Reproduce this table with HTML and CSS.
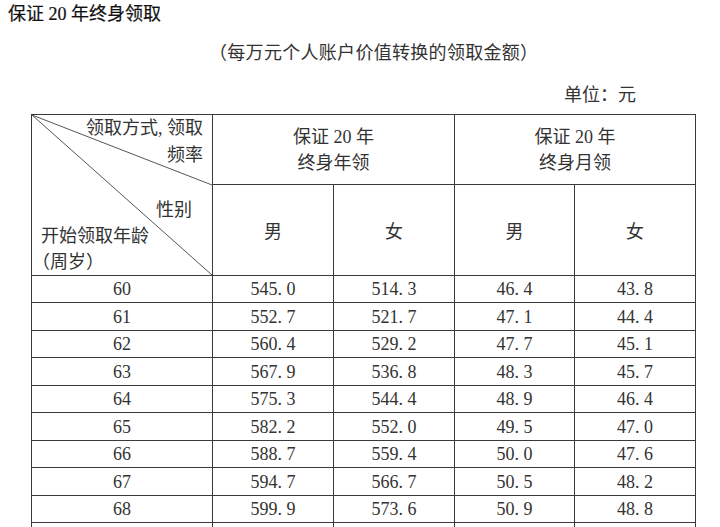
FILE: index.html
```html
<!DOCTYPE html>
<html lang="zh-CN">
<head>
<meta charset="utf-8">
<title>保证20年终身领取</title>
<link rel="stylesheet" href="styles.css">
</head>
<body>
<div class="page">
  <h1 class="title">保证 20 年终身领取</h1>
  <p class="subtitle">（每万元个人账户价值转换的领取金额）</p>
  <p class="unit">单位：元</p>
  <table class="grid">
    <colgroup>
      <col class="c-age">
      <col class="c-val">
      <col class="c-val">
      <col class="c-val2">
      <col class="c-val">
    </colgroup>
    <thead>
      <tr class="h1">
        <th class="diag" rowspan="2">
          <svg class="diag-lines" viewBox="0 0 181 160" preserveAspectRatio="none" aria-hidden="true">
            <line x1="0" y1="0" x2="181" y2="70" />
            <line x1="0" y1="0" x2="181" y2="160" />
          </svg>
          <div class="diag-text">
            <div class="diag-top">
              <span class="ln">领取方式, 领取</span>
              <span class="ln">频率</span>
            </div>
            <div class="diag-bottom">
              <span class="ln sex">性别</span>
              <span class="ln age">开始领取年龄</span>
              <span class="ln age paren">（周岁）</span>
            </div>
          </div>
        </th>
        <th colspan="2" class="grp">保证 20 年<br>终身年领</th>
        <th colspan="2" class="grp">保证 20 年<br>终身月领</th>
      </tr>
      <tr class="h2">
        <th class="sx">男</th>
        <th class="sx">女</th>
        <th class="sx">男</th>
        <th class="sx">女</th>
      </tr>
    </thead>
    <tbody>
      <tr><td>60</td><td>545<span class="p">.</span>0</td><td>514<span class="p">.</span>3</td><td>46<span class="p">.</span>4</td><td>43<span class="p">.</span>8</td></tr>
      <tr><td>61</td><td>552<span class="p">.</span>7</td><td>521<span class="p">.</span>7</td><td>47<span class="p">.</span>1</td><td>44<span class="p">.</span>4</td></tr>
      <tr><td>62</td><td>560<span class="p">.</span>4</td><td>529<span class="p">.</span>2</td><td>47<span class="p">.</span>7</td><td>45<span class="p">.</span>1</td></tr>
      <tr><td>63</td><td>567<span class="p">.</span>9</td><td>536<span class="p">.</span>8</td><td>48<span class="p">.</span>3</td><td>45<span class="p">.</span>7</td></tr>
      <tr><td>64</td><td>575<span class="p">.</span>3</td><td>544<span class="p">.</span>4</td><td>48<span class="p">.</span>9</td><td>46<span class="p">.</span>4</td></tr>
      <tr><td>65</td><td>582<span class="p">.</span>2</td><td>552<span class="p">.</span>0</td><td>49<span class="p">.</span>5</td><td>47<span class="p">.</span>0</td></tr>
      <tr><td>66</td><td>588<span class="p">.</span>7</td><td>559<span class="p">.</span>4</td><td>50<span class="p">.</span>0</td><td>47<span class="p">.</span>6</td></tr>
      <tr><td>67</td><td>594<span class="p">.</span>7</td><td>566<span class="p">.</span>7</td><td>50<span class="p">.</span>5</td><td>48<span class="p">.</span>2</td></tr>
      <tr><td>68</td><td>599<span class="p">.</span>9</td><td>573<span class="p">.</span>6</td><td>50<span class="p">.</span>9</td><td>48<span class="p">.</span>8</td></tr>
      <tr class="cut"><td></td><td></td><td></td><td></td><td></td></tr>
    </tbody>
  </table>
</div>
</body>
</html>
```

FILE: styles.css
```css
html, body {
  margin: 0;
  padding: 0;
  background: #ffffff;
}

body {
  font-family: "Liberation Serif", "Noto Sans CJK SC", serif;
  font-size: 18px;
  color: #333333;
  overflow: hidden;
}

.page {
  display: flex;
  flex-direction: column;
}

.title {
  margin: 0;
  padding-left: 8px;
  font-size: 18px;
  font-weight: normal;
  line-height: 28px;
  color: #111111;
  -webkit-text-stroke: 0.2px #111111;
}

.subtitle {
  margin: 11px 0 0 0;
  padding-left: 209px;
  line-height: 28px;
  letter-spacing: 0.3px;
}

.unit {
  margin: 14px 0 0 0;
  padding-right: 84px;
  text-align: right;
  line-height: 28px;
}

.grid {
  margin: 5px 0 0 31px;
  border-collapse: collapse;
  table-layout: fixed;
  width: 665px;
  border: 1px solid #333333;
}

.c-age { width: 181px; }
.c-val { width: 121px; }
.c-val2 { width: 120px; }

.grid th,
.grid td {
  border: 1px solid #3a3a3a;
  padding: 0;
  font-weight: normal;
  text-align: center;
  vertical-align: middle;
}

.h1 { height: 70px; }
.h2 { height: 90px; }

.grp {
  line-height: 26px;
}

.grid tbody tr { height: 27.4px; }
.grid td { line-height: 26px; }

.p {
  display: inline-block;
  width: 0.5em;
  text-align: left;
}

.diag {
  position: relative;
  padding: 0;
}

.diag-lines {
  position: absolute;
  left: 0;
  top: 0;
  width: 100%;
  height: 100%;
  stroke: #555555;
  stroke-width: 1;
  pointer-events: none;
}

.diag-lines line {
  vector-effect: non-scaling-stroke;
}

.diag-text {
  display: flex;
  flex-direction: column;
  justify-content: space-between;
  height: 160px;
}

.diag-top,
.diag-bottom {
  display: flex;
  flex-direction: column;
}

.diag-top .ln {
  text-align: right;
  padding-right: 9px;
  line-height: 27px;
}

.diag-bottom .ln {
  line-height: 26px;
}

.sex {
  text-align: right;
  padding-right: 20px;
}

.age {
  text-align: left;
  padding-left: 9px;
}

.paren {
  padding-left: 0;
}
```
